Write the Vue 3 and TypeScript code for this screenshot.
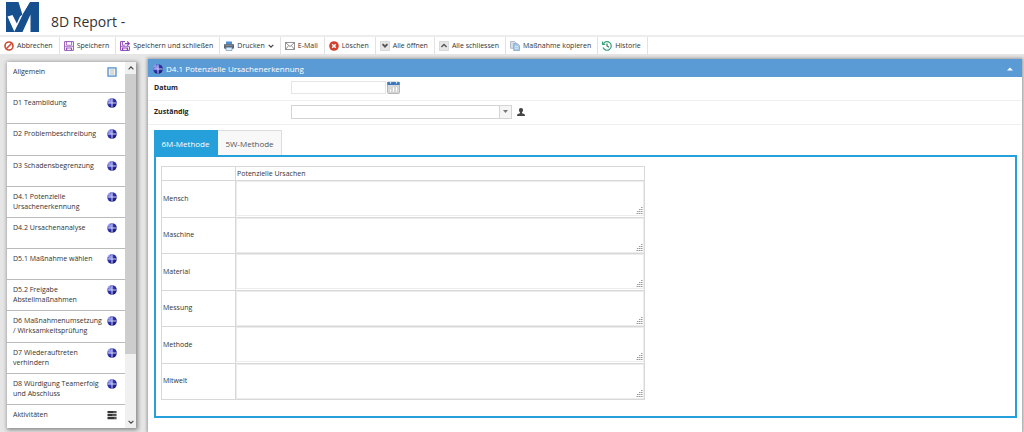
<script setup lang="ts">
import { ref } from 'vue'

interface Action { icon: string; label: string; menu?: boolean }
interface Section { label: string; icon: 'form' | 'globe' | 'list' }

const actions: Action[] = [
  { icon: 'cancel', label: 'Abbrechen' },
  { icon: 'save', label: 'Speichern' },
  { icon: 'saveClose', label: 'Speichern und schließen' },
  { icon: 'print', label: 'Drucken', menu: true },
  { icon: 'mail', label: 'E-Mail' },
  { icon: 'delete', label: 'Löschen' },
  { icon: 'open', label: 'Alle öffnen' },
  { icon: 'close', label: 'Alle schliessen' },
  { icon: 'copy', label: 'Maßnahme kopieren' },
  { icon: 'history', label: 'Historie' },
]

const sections: Section[] = [
  { label: 'Allgemein', icon: 'form' },
  { label: 'D1 Teambildung', icon: 'globe' },
  { label: 'D2 Problembeschreibung', icon: 'globe' },
  { label: 'D3 Schadensbegrenzung', icon: 'globe' },
  { label: 'D4.1 Potenzielle Ursachenerkennung', icon: 'globe' },
  { label: 'D4.2 Ursachenanalyse', icon: 'globe' },
  { label: 'D5.1 Maßnahme wählen', icon: 'globe' },
  { label: 'D5.2 Freigabe Abstellmaßnahmen', icon: 'globe' },
  { label: 'D6 Maßnahmenumsetzung / Wirksamkeitsprüfung', icon: 'globe' },
  { label: 'D7 Wiederauftreten verhindern', icon: 'globe' },
  { label: 'D8 Würdigung Teamerfolg und Abschluss', icon: 'globe' },
  { label: 'Aktivitäten', icon: 'list' },
]

const causes = ref(
  ['Mensch', 'Maschine', 'Material', 'Messung', 'Methode', 'Mitwelt'].map((name) => ({ name, text: '' })),
)
const tabs = ['6M-Methode', '5W-Methode']
const activeTab = ref(0)
const date = ref('')
</script>

<template>
  <div class="app">
    <svg class="defs" aria-hidden="true">
      <defs>
        <radialGradient id="sphere" cx="0.3" cy="0.3" r="0.75">
          <stop offset="0" stop-color="#a9aef0" />
          <stop offset="0.4" stop-color="#3a3cba" />
          <stop offset="1" stop-color="#16167c" />
        </radialGradient>
        <symbol id="globe" viewBox="0 0 10 10">
          <circle cx="5" cy="5" r="4.8" fill="url(#sphere)" />
          <path d="M5 .4v9.2M.4 5h9.2" stroke="#dfe2fb" stroke-width=".9" />
          <path d="M1.4 1.9 3 .8M.6 3.6l.9-1.4" stroke="#c9cdf6" stroke-width=".8" />
        </symbol>
      </defs>
    </svg>

    <header class="top">
      <svg class="logo" viewBox="0 0 33 30" role="img" aria-label="Logo">
        <path fill="#17508f" d="M0 0h12.500L16.500 13 24 0h9v30h-8.500V12.500L16.500 30H0z" />
        <path fill="#fff" d="M1.500 14.500 6.500 13l4.300 8.500L14 14.500 17 12l-1.500 4.500L8.500 30z" />
        <path fill="#17508f" d="M24.500 0v4L12.500 30H8.200L17 12z" />
      </svg>
      <h1>8D Report -</h1>
    </header>

    <div class="toolbar" role="toolbar">
      <button v-for="a in actions" :key="a.label" type="button" class="action">
        <svg viewBox="0 0 10 10" aria-hidden="true">
          <g v-if="a.icon === 'cancel'" fill="none" stroke="#cf4a30" stroke-width="1.6">
            <circle cx="5" cy="5" r="4" /><path d="M2.3 7.7 7.7 2.3" />
          </g>
          <g v-else-if="a.icon === 'save'" fill="none" stroke="#9656b8">
            <path d="M.6.6h8.8v8.8H.6z" /><path d="M2.5.6v3.6h5V.6M.6 5.3h8.8" stroke-width=".8" />
            <path d="M2.6 9.4V7h4.8v2.4" stroke-width="1.2" />
          </g>
          <g v-else-if="a.icon === 'saveClose'" fill="none" stroke="#8a3fb4">
            <path d="M5 .6H.6v8.800h8.800V5.500" /><path d="M2.500.600v3.600h2.500M.600 5.300h8.800" stroke-width=".8" />
            <path d="M2.600 9.400V7h4.800v2.400" stroke-width="1.2" /><path d="M5 2.600h4M7.200.500l2.200 2.100-2.200 2.100" stroke-width="1.100" />
          </g>
          <g v-else-if="a.icon === 'print'">
            <path d="M2 .5h6V4H2z" fill="#4f8fd0" /><rect y="3" width="10" height="4.7" rx="1" fill="#5b6470" />
            <path d="M1.2 4.2h7.6" stroke="#a9b3bd" stroke-width=".7" />
            <path d="M2 6.2h6v3.4H2z" fill="#dcecfa" stroke="#5b7fa5" stroke-width=".6" />
          </g>
          <g v-else-if="a.icon === 'mail'" fill="none" stroke="#777" stroke-width=".8">
            <path d="M.5 1.5h9v7h-9zM.5 1.5 5 5.6l4.500-4.100M.5 8.500l3.200-4M9.500 8.500l-3.200-4" />
          </g>
          <g v-else-if="a.icon === 'delete'">
            <circle cx="5" cy="5" r="4.8" fill="#d2402d" /><path d="m3.2 3.2 3.6 3.6m0-3.6L3.2 6.8" stroke="#fff" stroke-width="1.5" />
          </g>
          <g v-else-if="a.icon === 'open' || a.icon === 'close'">
            <rect x=".3" y=".3" width="9.4" height="9.4" rx=".6" fill="#e6e6e6" stroke="#c6c6c6" stroke-width=".6" />
            <path v-if="a.icon === 'open'" d="M2.300 2.800h1.300L5 4.300l1.400-1.500h1.300v1.400L5 7 2.300 4.200z" fill="#555" />
            <path v-else d="M2.4 6 5 3.500 7.600 6" fill="none" stroke="#555" stroke-width="1.4" />
          </g>
          <g v-else-if="a.icon === 'copy'" stroke-width=".6">
            <path d="M.5.5h4l1.700 1.800v5H.5z" fill="#d5dfe9" stroke="#8d9cab" />
            <path d="M3.7 2.7h3.8l2 2v4.8H3.7z" fill="#a9cbed" stroke="#6c8fb4" />
            <path d="M4.8 5.5h3.4M4.8 7.3h3.4" stroke="#e9f3fc" />
          </g>
          <g v-else fill="none" stroke="#35a377" stroke-width="1.2">
            <path d="M1.3 2.7A4.3 4.3 0 1 1 1 6.6" /><path d="M.5.6v2.8h2.8" /><path d="M5 2.6V5l2 1.3" stroke="#397a60" />
          </g>
        </svg>
        <span>{{ a.label }}</span>
        <svg v-if="a.menu" class="chevron" viewBox="0 0 6 6" aria-hidden="true">
          <path d="M.7 1.8 3 4.1l2.3-2.3" fill="none" stroke="#444" stroke-width="1.2" />
        </svg>
      </button>
    </div>

    <div class="workspace">
      <nav class="sidebar" aria-label="Abschnitte">
        <div class="sections">
          <button v-for="s in sections" :key="s.label" type="button" class="section">
            <span>{{ s.label }}</span>
            <svg viewBox="0 0 10 10" aria-hidden="true">
              <g v-if="s.icon === 'form'">
                <path d="M1 .8h8v8.4H1z" fill="#f1f1ec" stroke="#4f8fca" stroke-width="1.3" />
                <path d="M3 3h4M3 5h4M3 7h4" stroke="#a5b0b8" stroke-width=".7" />
              </g>
              <use v-else-if="s.icon === 'globe'" href="#globe" />
              <g v-else>
                <path d="M.5 1h9v2.200h-9zM.5 4h9v2.200h-9zM.5 7h9v2.200h-9z" fill="#333" />
                <path d="M6 2.1h3M5 5.1h4M7 8.1h2" stroke="#aaa" stroke-width=".6" />
              </g>
            </svg>
          </button>
        </div>
        <div class="scrollbar">
          <button type="button" aria-label="Nach oben">
            <svg viewBox="0 0 6 6"><path d="M.6 4.3 3 1.9l2.4 2.4" fill="none" stroke="#444" stroke-width="1.1" /></svg>
          </button>
          <div class="track"><div class="thumb"></div></div>
          <button type="button" aria-label="Nach unten">
            <svg viewBox="0 0 6 6"><path d="M.6 1.8 3 4.2l2.4-2.4" fill="none" stroke="#444" stroke-width="1.1" /></svg>
          </button>
        </div>
      </nav>

      <main class="panel">
        <div class="panel-head">
          <svg class="globe" viewBox="0 0 10 10" aria-hidden="true"><use href="#globe" /></svg>
          <h2>D4.1 Potenzielle Ursachenerkennung</h2>
          <button type="button" class="collapse" aria-label="Einklappen">
            <svg viewBox="0 0 6 4"><path d="M0 3.6 3 .6l3 3z" fill="#fff" /></svg>
          </button>
        </div>

        <div class="field">
          <label for="date">Datum</label>
          <input id="date" v-model="date" type="text" />
          <button type="button" class="calendar" aria-label="Kalender">
            <svg viewBox="0 0 13 13">
              <rect x=".5" y="1" width="12" height="11.5" rx="1" fill="#d9d9d9" stroke="#a8a8a8" stroke-width=".8" />
              <path d="M.4 1h12.2v3H.4z" fill="#3f78b8" />
              <path d="M3.5 0v2.4M9.5 0v2.4" stroke="#dce7f2" stroke-width="1.2" />
              <path d="M2.5 8h2v3h-2zM5.5 6h2v5h-2zM8.5 6h2v5h-2z" fill="#fff" stroke="#b5b5b5" stroke-width=".4" />
            </svg>
          </button>
        </div>
        <div class="field">
          <label for="owner">Zuständig</label>
          <div class="combo">
            <select id="owner"><option value=""></option></select>
            <span class="arrow"><svg viewBox="0 0 5 3"><path d="M0 0h5L2.5 3z" fill="#777" /></svg></span>
          </div>
          <button type="button" class="person" aria-label="Person wählen">
            <svg viewBox="0 0 8 8"><path d="M4 0c1.400 0 2 .9 2 2.100 0 1-.5 2-1 2.400v.8l2.200.8q.8.4.8 1.900H0q0-1.500.8-1.900L3 5.300v-.8C2.500 4.100 2 3.100 2 2.100 2 .9 2.600 0 4 0z" fill="#444" /></svg>
          </button>
        </div>

        <div class="tabbed">
          <div class="tabs" role="tablist">
            <button
              v-for="(t, i) in tabs" :key="t" type="button" role="tab"
              :aria-selected="i === activeTab" :class="{ active: i === activeTab }" @click="activeTab = i"
            >{{ t }}</button>
          </div>
          <div class="tab-body" role="tabpanel">
            <table>
              <thead>
                <tr><td></td><th scope="col">Potenzielle Ursachen</th></tr>
              </thead>
              <tbody>
                <tr v-for="(c, i) in causes" :key="c.name">
                  <th scope="row"><label :for="'cause' + i">{{ c.name }}</label></th>
                  <td>
                    <div class="area">
                      <textarea :id="'cause' + i" v-model="c.text"></textarea>
                      <svg class="grip" viewBox="0 0 7 7" aria-hidden="true">
                        <path d="M5 .5h1.500M3 2.500h1.500M5 2.500h1.500M1 4.500h1.500M3 4.500h1.500M5 4.500h1.500M0 6.500h.5M1 6.500h1.500M3 6.500h1.500M5 6.500h1.500" stroke="#999" stroke-width="1" />
                      </svg>
                    </div>
                  </td>
                </tr>
              </tbody>
            </table>
          </div>
        </div>
      </main>
    </div>
  </div>
</template>

<style>
body { margin: 0; background: #e6e6e6; }
</style>

<style scoped>
.app {
  display: flex;
  flex-direction: column;
  min-height: 100vh;
  font: 7px/10px "Open Sans", "Noto Sans", sans-serif;
  color: #333;
}
.app *, .app *::before { box-sizing: border-box; }
button, input, select, textarea { font: inherit; color: inherit; margin: 0; padding: 0; border: 0; background: none; border-radius: 0; }
button { cursor: pointer; }
button svg { display: block; }
.defs { position: absolute; width: 0; height: 0; }

.top { display: flex; align-items: center; gap: 12px; height: 35px; padding: 0 6px 2px; background: #fff; }
.logo { width: 33px; height: 30px; }
h1 { margin: 10px 0 0; font-size: 14px; line-height: 20px; font-weight: 400; }

.toolbar { display: flex; height: 19px; background: #fff; border-top: 2px solid #ededed; }
.action { display: flex; align-items: center; gap: 3px; padding: 1px 6px 0 4px; border-right: 1px solid #e2e2e2; white-space: nowrap; }
.action svg { width: 10px; height: 10px; flex: none; }
.action .chevron { width: 6px; height: 6px; }

.workspace { flex: 1; display: flex; gap: 12px; padding: 5px 2px 0 7px; }
.sidebar { display: flex; width: 129px; flex: none; margin: 3px 0 4px; background: #fff; box-shadow: 1px 1px 4px 1px #888; }
.sections { flex: 1; display: grid; grid-template-rows: repeat(11, minmax(0, 1fr)) 23px; overflow: hidden; }
.section { display: flex; align-items: flex-start; justify-content: space-between; padding: 5px 8px 0 6px; text-align: left; border-bottom: 1px solid #bbb; }
.section:last-child { border-bottom: 0; }
.section span { max-width: 92px; }
.section svg { width: 10px; height: 10px; flex: none; }
.scrollbar { display: flex; flex-direction: column; width: 11px; background: #f0f0f0; }
.scrollbar button { display: grid; place-items: center; height: 12px; }
.scrollbar svg { width: 6px; height: 6px; }
.track { flex: 1; }
.thumb { height: 82%; background: #cdcdcd; }

.panel { flex: 1; min-width: 0; background: #fff; box-shadow: 0 0 3px 1px #999; }
.panel-head { display: flex; align-items: center; gap: 3px; height: 18px; padding: 2px 9px 0 5px; background: #5b9bd5; color: #fff; }
.globe { width: 10px; height: 10px; }
h2 { margin: 0; flex: 1; font-size: 8px; line-height: 12px; font-weight: 400; }
.collapse svg { width: 6px; height: 4px; }

.field { display: flex; align-items: center; height: 24px; padding: 0 0 2px 6px; border-bottom: 1px solid #f0f0f0; }
.field label { width: 137px; font-weight: 700; color: #222; }
.field input { width: 95px; height: 13px; padding: 0 2px; border: 1px solid #e6e6e6; }
.calendar svg { width: 13px; height: 13px; }
.calendar { margin-left: 1px; }
.combo { display: flex; width: 221px; height: 14px; border: 1px solid #d4d4d4; }
.combo select { flex: 1; min-width: 0; appearance: none; padding: 0 2px; }
.arrow { display: grid; place-items: center; width: 12px; background: #f5f5f5; border-left: 1px solid #d4d4d4; pointer-events: none; }
.arrow svg { width: 5px; height: 3px; }
.person { margin-left: 5px; }
.person svg { width: 8px; height: 8px; }

.tabbed { padding: 5px 5px 14px 6px; }
.tabs { display: flex; }
.tabs button { width: 64px; height: 25px; padding-top: 2px; font-size: 8px; border: 1px solid #ddd; border-width: 1px 1px 0 0; background: #f8f8f8; color: #555; }
.tabs .active { background: #26a0da; border-color: #26a0da; color: #fff; }
.tab-body { padding: 9px 5px 16px; border: 2px solid #26a0da; }
table { width: 57%; height: 234px; border-collapse: collapse; table-layout: fixed; }
th, td { padding: 0; border: 1px solid #d8d8d8; font-weight: 400; text-align: left; }
thead td { width: 74px; height: 14px; }
thead th, tbody th { padding-left: 1px; }
.area { position: relative; display: flex; height: 35px; }
.area textarea { flex: 1; resize: none; padding: 2px; border: 1px solid #ececec; }
.grip { position: absolute; right: 1px; bottom: 2px; width: 7px; height: 7px; }
</style>
